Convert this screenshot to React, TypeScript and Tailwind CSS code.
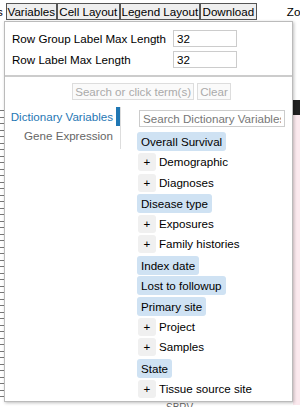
import React from "react";

const tree: { label: string; leaf: boolean }[] = [
  { label: "Overall Survival", leaf: true },
  { label: "Demographic", leaf: false },
  { label: "Diagnoses", leaf: false },
  { label: "Disease type", leaf: true },
  { label: "Exposures", leaf: false },
  { label: "Family histories", leaf: false },
  { label: "Index date", leaf: true },
  { label: "Lost to followup", leaf: true },
  { label: "Primary site", leaf: true },
  { label: "Project", leaf: false },
  { label: "Samples", leaf: false },
  { label: "State", leaf: true },
  { label: "Tissue source site", leaf: false },
];

const App = () => {
  return (
    <div className="relative h-[407px] w-[300px] overflow-hidden whitespace-nowrap bg-white font-['Liberation_Sans',Arial,sans-serif] text-[11.6px] leading-[14px] text-black">
      {/* background chart bits */}
      <div className="absolute left-0 top-[110px] flex flex-col gap-[5.5px]">
        {Array.from({ length: 45 }).map((_, i) => (
          <div key={i} className="h-px w-[4px] bg-[#777]" />
        ))}
      </div>
      <div className="absolute left-[293px] top-[100px] h-[15px] w-[7px] bg-[#222]" />
      <div className="absolute left-[293px] top-[115px] h-[290px] w-[7px] bg-[#fbe9ee]" />
      <div className="absolute left-[166px] top-[402px] text-[10px] leading-[12px] text-[#666]">SBRV</div>

      <div className="flex items-center pt-[3px]">
        <span className="ml-[-3px] mr-[3px] shrink-0">s</span>
        <button className="h-[17px] w-[51px] shrink-0 border border-[#555] bg-[#efefef] px-0 leading-[15px]">
          Variables
        </button>
        <button className="h-[17px] w-[63px] shrink-0 border border-[#555] bg-[#efefef] px-0 leading-[15px]">
          Cell Layout
        </button>
        <button className="h-[17px] w-[80px] shrink-0 border border-[#555] bg-[#efefef] px-0 leading-[15px]">
          Legend Layout
        </button>
        <button className="h-[17px] w-[57px] shrink-0 border border-[#555] bg-[#efefef] px-0 leading-[15px]">
          Download
        </button>
        <span className="ml-[30px] shrink-0">Zo</span>
      </div>

      <div className="absolute left-[4px] top-[21px] h-[381px] w-[289px] border border-[#bbb] bg-white shadow-[1px_1px_3px_rgba(0,0,0,0.25)]">
        <div className="flex flex-col gap-[4px] px-[7px] pt-[8px]">
          <div className="flex items-center">
            <span className="w-[161px]">Row Group Label Max Length</span>
            <input
              readOnly
              value="32"
              className="h-[17px] w-[64px] border border-[#ccc] px-[3px] text-[11.6px] outline-none"
            />
          </div>
          <div className="flex items-center">
            <span className="w-[161px]">Row Label Max Length</span>
            <input
              readOnly
              value="32"
              className="h-[17px] w-[64px] border border-[#ccc] px-[3px] text-[11.6px] outline-none"
            />
          </div>
        </div>
        <div className="mt-[7px] h-[2px] bg-[#ccc]" />
        <div className="mt-[6px] flex justify-center gap-[3px] pl-[6px]">
          <button className="h-[17px] border border-[#ddd] bg-[#fafafa] px-[2px] leading-[15px] text-[#aaa]">
            Search or click term(s)
          </button>
          <button className="h-[17px] border border-[#ddd] bg-[#fafafa] px-[2px] leading-[15px] text-[#aaa]">
            Clear
          </button>
        </div>

        <div className="mt-[5px] flex">
          <div className="w-[116px] pt-[2px]">
            <div className="flex justify-end">
              <div className="flex flex-col items-end border-r border-[#ddd] pb-[3px]">
                <div className="flex items-center">
                  <span className="pr-[3px] text-[#1f77b4]">Dictionary Variables</span>
                  <div className="h-[19px] w-[4px] bg-[#1f77b4]" />
                </div>
                <div className="py-[3px] pr-[7px] text-[#666]">Gene Expression</div>
              </div>
            </div>
          </div>
          <div className="ml-[16px] flex flex-col pt-[5px]">
            <input
              readOnly
              placeholder="Search Dictionary Variables"
              className="ml-[2px] h-[17px] w-[146px] border border-[#ccc] px-[3px] text-[11.6px] outline-none placeholder:text-[#777]"
            />
            <div className="mt-[5px] flex flex-col gap-[1.6px]">
              {tree.map((t) =>
                t.leaf ? (
                  <div key={t.label} className="flex h-[19px]">
                    <span className="rounded-[3px] bg-[#cfe2f3] px-[4px] leading-[19px]">{t.label}</span>
                  </div>
                ) : (
                  <div key={t.label} className="flex h-[19px] items-center">
                    <span className="ml-[1px] flex h-[18px] w-[18px] items-center justify-center rounded-[3px] bg-[#f0f0f0]">
                      +
                    </span>
                    <span className="ml-[3px]">{t.label}</span>
                  </div>
                )
              )}
            </div>
          </div>
        </div>
      </div>
    </div>
  );
};

export default App;
